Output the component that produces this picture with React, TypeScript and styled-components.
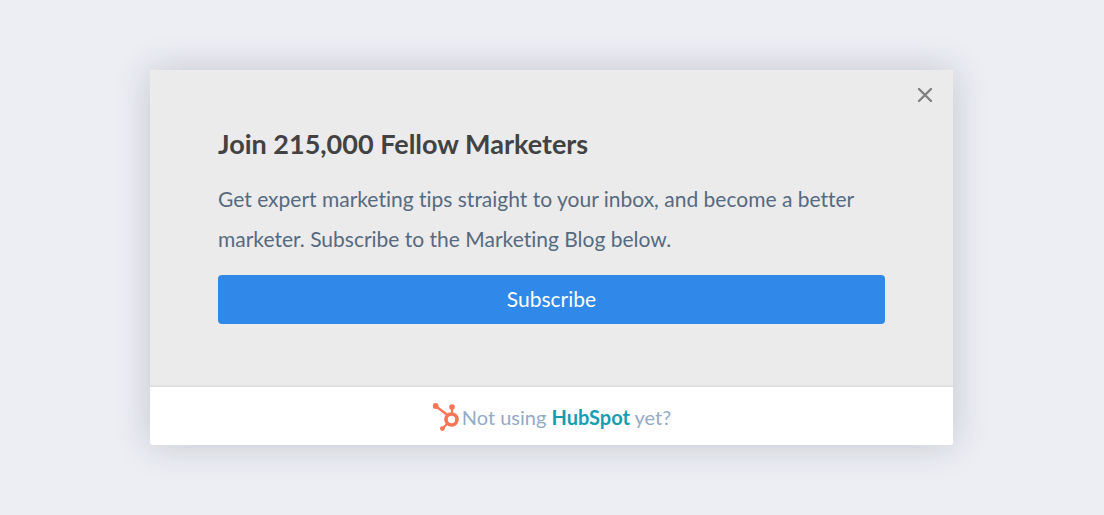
import React from "react";
import styled, { createGlobalStyle } from "styled-components";

const GlobalStyle = createGlobalStyle`
  *, *::before, *::after { box-sizing: border-box; }
  body {
    margin: 0;
    background: #eceef4;
    font-family: Lato, "Open Sans", sans-serif;
    font-variant-ligatures: none;
  }
`;

const Page = styled.main`
  min-height: 100vh;
  padding: 70px 25px 70px 24px;
  background: #eceef4;
`;

const Card = styled.section`
  position: relative;
  width: 100%;
  max-width: 803px;
  margin: 0 auto;
  border-radius: 3px;
  background: #ffffff;
  box-shadow: 0 0 36px rgba(40, 40, 50, 0.2);
`;

const Body = styled.div`
  padding: 54px 68px 61px;
  border-bottom: 2px solid #e0e0e0;
  border-radius: 3px 3px 0 0;
  background: #ebebeb;
`;

const CloseButton = styled.button`
  position: absolute;
  top: 12px;
  right: 15px;
  display: flex;
  align-items: center;
  justify-content: center;
  width: 26px;
  height: 26px;
  padding: 0;
  border: 0;
  background: none;
  cursor: pointer;
`;

const Title = styled.h1`
  margin: 0 0 15px;
  color: #424242;
  font-size: 27px;
  font-weight: 700;
  line-height: 40px;
`;

const Text = styled.p`
  margin: 0 0 16px;
  color: #566a80;
  font-size: 21px;
  line-height: 40px;
`;

const SubscribeButton = styled.button`
  display: block;
  width: 100%;
  padding: 0 16px 2px;
  border: 0;
  border-radius: 4px;
  background: #3088e8;
  color: #ffffff;
  font-family: inherit;
  font-size: 21px;
  line-height: 47px;
  cursor: pointer;
`;

const Footer = styled.footer`
  display: flex;
  align-items: center;
  justify-content: center;
  gap: 2px;
  padding: 15px 16px 13px;
  color: #94aac8;
  font-size: 20px;
  line-height: 30px;
`;

const BrandLink = styled.a`
  color: #179db3;
  font-weight: 700;
  text-decoration: none;
`;

function Sprocket() {
  return (
    <svg width="28" height="30" viewBox="0 0 28 30" aria-hidden="true">
      <g fill="none" stroke="#fa7556">
        <circle cx="19.5" cy="17.5" r="5.5" strokeWidth="3.6" />
        <path d="M3.5 4 15.5 13" strokeWidth="2.4" />
        <path d="M20 5v7M15.5 21.5l-5 5" strokeWidth="2.2" />
      </g>
      <g fill="#fa7556">
        <circle cx="3.7" cy="4" r="2.9" />
        <circle cx="20" cy="5" r="2.8" />
        <circle cx="10.4" cy="26.6" r="2.4" />
      </g>
    </svg>
  );
}

export default function App() {
  return (
    <>
      <GlobalStyle />
      <Page>
        <Card aria-labelledby="signup-title">
          <Body>
            <Title id="signup-title">Join 215,000 Fellow Marketers</Title>
            <Text>
              Get expert marketing tips straight to your inbox, and become a better
              marketer. Subscribe to the Marketing Blog below.
            </Text>
            <SubscribeButton type="button">Subscribe</SubscribeButton>
          </Body>
          <Footer>
            <Sprocket />
            <span>
              Not using <BrandLink href="#">HubSpot</BrandLink> yet?
            </span>
          </Footer>
          <CloseButton type="button" aria-label="Close">
            <svg width="16" height="16" viewBox="0 0 16 16" aria-hidden="true">
              <path d="M2 2l12 12M14 2L2 14" fill="none" stroke="#808080" strokeWidth="2.4" strokeLinecap="round" />
            </svg>
          </CloseButton>
        </Card>
      </Page>
    </>
  );
}
